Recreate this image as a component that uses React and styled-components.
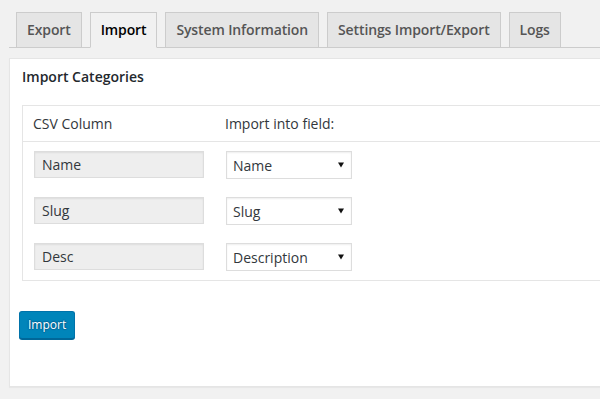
import React from 'react';
import styled, { createGlobalStyle } from 'styled-components';

const GlobalStyle = createGlobalStyle`
  html, body {
    margin: 0;
    background: #f1f1f1;
    font-family: "Open Sans", "Liberation Sans", sans-serif;
    color: #444;
  }
`;

const Page = styled.div`
  padding: 12px 0 0 9px;
  min-height: 100vh;
  box-sizing: border-box;
  overflow: hidden;
`;

const TabBar = styled.nav`
  display: flex;
  gap: 8px;
  padding-left: 7px;
  border-bottom: 1px solid #ccc;
`;

const Tab = styled.div`
  margin-bottom: -1px;
  padding: 5px 10px;
  font-size: 14px;
  line-height: 24px;
  font-weight: 600;
  letter-spacing: -0.12px;
  border: 1px solid #ccc;
  border-bottom-color: ${p => (p.$active ? '#f1f1f1' : '#ccc')};
  background: ${p => (p.$active ? '#f1f1f1' : '#e5e5e5')};
  color: ${p => (p.$active ? '#000' : '#555')};
`;

const Card = styled.section`
  display: flex;
  flex-direction: column;
  align-items: flex-start;
  margin: 10px -20px 0 0;
  padding: 8px 0 47px 12px;
  background: #fff;
  border: 1px solid #e5e5e5;
  box-shadow: 0 1px 1px rgba(0, 0, 0, 0.04);
`;

const Heading = styled.h2`
  margin: 0 0 18px;
  font-size: 14px;
  line-height: 20px;
  font-weight: 600;
  color: #23282d;
`;

const Table = styled.div`
  align-self: stretch;
  border: 1px solid #e5e5e5;
`;

const HeaderRow = styled.div`
  display: grid;
  grid-template-columns: 192px auto;
  align-items: center;
  height: 35px;
  padding: 0 10px;
  border-bottom: 1px solid #e5e5e5;
  font-size: 14px;
  color: #32373c;
`;

const Body = styled.div`
  display: flex;
  flex-direction: column;
  gap: 18px;
  padding: 9px 11px 9px;
`;

const Row = styled.div`
  display: grid;
  grid-template-columns: 192px auto;
  align-items: start;
`;

const ColumnName = styled.div`
  box-sizing: border-box;
  width: 170px;
  height: 27px;
  padding: 0 7px;
  line-height: 25px;
  font-size: 14px;
  color: #32373c;
  background: #eee;
  border: 1px solid #ddd;
  box-shadow: inset 0 1px 2px rgba(0, 0, 0, 0.07);
`;

const FieldSelect = styled.div`
  box-sizing: border-box;
  width: 126px;
  height: 28px;
  padding: 0 7px 0 6px;
  display: flex;
  align-items: center;
  justify-content: space-between;
  font-size: 14px;
  color: #32373c;
  background: #fff;
  border: 1px solid #ddd;
  box-shadow: inset 0 1px 2px rgba(0, 0, 0, 0.07);
`;

const Arrow = styled.svg`
  width: 6px;
  height: 6px;
  margin-top: -1px;
`;

const SubmitButton = styled.button`
  display: block;
  box-sizing: border-box;
  margin: 30px 0 0 -3px;
  height: 28px;
  padding: 0 8px 1px;
  font-family: inherit;
  font-size: 12px;
  color: #fff;
  background: #0085ba;
  border: 1px solid #0073aa;
  border-bottom-color: #006799;
  border-radius: 3px;
  box-shadow: 0 1px 0 #006799;
  text-shadow: 0 -1px 1px #006799, 1px 0 1px #006799, 0 1px 1px #006799, -1px 0 1px #006799;
`;

const tabs = ['Export', 'Import', 'System Information', 'Settings Import/Export', 'Logs'];

const mappings = [
  { column: 'Name', field: 'Name' },
  { column: 'Slug', field: 'Slug' },
  { column: 'Desc', field: 'Description' },
];

function App() {
  return (
    <Page>
      <GlobalStyle />
      <TabBar>
        {tabs.map(tab => (
          <Tab key={tab} $active={tab === 'Import'}>{tab}</Tab>
        ))}
      </TabBar>
      <Card>
        <Heading>Import Categories</Heading>
        <Table>
          <HeaderRow>
            <span>CSV Column</span>
            <span>Import into field:</span>
          </HeaderRow>
          <Body>
            {mappings.map(m => (
              <Row key={m.column}>
                <ColumnName>{m.column}</ColumnName>
                <FieldSelect>
                  <span>{m.field}</span>
                  <Arrow viewBox="0 0 6 6">
                    <path d="M0 0.5 L6 0.5 L3 5.5 Z" fill="#111" />
                  </Arrow>
                </FieldSelect>
              </Row>
            ))}
          </Body>
        </Table>
        <SubmitButton>Import</SubmitButton>
      </Card>
    </Page>
  );
}

export default App;
